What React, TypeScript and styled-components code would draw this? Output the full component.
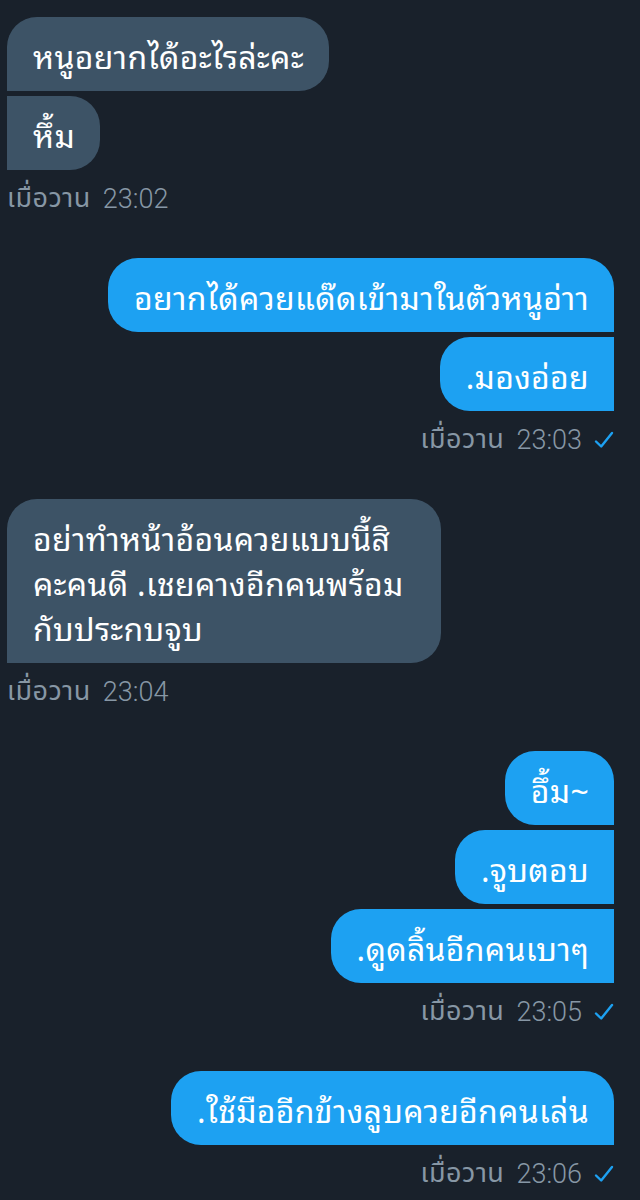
import styled, { createGlobalStyle } from "styled-components";

const GlobalStyle = createGlobalStyle`
  html, body {
    margin: 0;
    padding: 0;
    background: #19212b;
  }
  body {
    font-family: "Noto Sans Thai Looped", "Noto Sans", sans-serif;
  }
`;

type Side = "in" | "out";

const Screen = styled.div`
  width: 640px;
  height: 1200px;
  box-sizing: border-box;
  padding: 17px 26px 0 7px;
  background: #19212b;
  overflow: hidden;
`;

const Group = styled.div<{ $side: Side }>`
  display: flex;
  flex-direction: column;
  align-items: ${(p) => (p.$side === "in" ? "flex-start" : "flex-end")};
  gap: 5px;
  margin-bottom: 44px;
`;

const Bubble = styled.div<{ $side: Side; $first: boolean; $wrapped: boolean }>`
  box-sizing: border-box;
  width: ${(p) => (p.$wrapped ? "434px" : "auto")};
  padding: 14.5px 25px 14.5px 26px;
  font-size: 32px;
  letter-spacing: 0.3px;
  color: #ffffff;
  white-space: nowrap;
  background: ${(p) => (p.$side === "in" ? "#3d5366" : "#1da1f2")};
  border-radius: 30px;
  ${(p) =>
    p.$side === "in"
      ? `
    ${!p.$first ? "border-top-left-radius: 0;" : ""}
    border-bottom-left-radius: 0;
  `
      : `
    ${!p.$first ? "border-top-right-radius: 0;" : ""}
    border-bottom-right-radius: 0;
  `}
`;

const Line = styled.div`
  height: 45px;
  line-height: 45px;
`;

const Meta = styled.div`
  display: flex;
  align-items: center;
  height: 30px;
  margin-top: 9px;
  color: #8797a5;
  font-size: 27px;
  line-height: 30px;
`;

const Day = styled.span`
  font-family: "Noto Sans Thai", "Noto Sans", sans-serif;
  font-weight: 400;
  letter-spacing: 0.5px;
`;

const Clock = styled.span`
  font-family: Roboto, "Noto Sans", sans-serif;
  font-weight: 300;
  margin-left: 12px;
`;

const TickBox = styled.span`
  display: flex;
  margin-left: 12px;
`;

const Tick = () => (
  <TickBox>
    <svg width="20" height="18" viewBox="0 0 20 18" fill="none">
      <path
        d="M2 10.5 L7.2 15.5 L18 2"
        stroke="#1da1f2"
        strokeWidth="2.4"
        strokeLinecap="round"
        strokeLinejoin="round"
      />
    </svg>
  </TickBox>
);

// each bubble is a list of lines, broken where the screenshot breaks them
type Chat = { side: Side; bubbles: string[][]; time: string };

const chats: Chat[] = [
  {
    side: "in",
    bubbles: [["หนูอยากได้อะไรล่ะคะ"], ["หึ้ม"]],
    time: "23:02",
  },
  {
    side: "out",
    bubbles: [["อยากได้ควยแด๊ดเข้ามาในตัวหนูอ่าา"], [".มองอ่อย"]],
    time: "23:03",
  },
  {
    side: "in",
    bubbles: [
      ["อย่าทำหน้าอ้อนควยแบบนี้สิ", "คะคนดี .เชยคางอีกคนพร้อม", "กับประกบจูบ"],
    ],
    time: "23:04",
  },
  {
    side: "out",
    bubbles: [["อึ้ม~"], [".จูบตอบ"], [".ดูดลิ้นอีกคนเบาๆ"]],
    time: "23:05",
  },
  {
    side: "out",
    bubbles: [[".ใช้มืออีกข้างลูบควยอีกคนเล่น"]],
    time: "23:06",
  },
];

export default function App() {
  return (
    <>
      <GlobalStyle />
      <Screen>
        {chats.map((c, i) => (
          <Group key={i} $side={c.side}>
            {c.bubbles.map((lines, j) => (
              <Bubble
                key={j}
                $side={c.side}
                $first={j === 0}
                $wrapped={lines.length > 1}
              >
                {lines.map((l, k) => (
                  <Line key={k}>{l}</Line>
                ))}
              </Bubble>
            ))}
            <Meta>
              <Day>เมื่อวาน</Day>
              <Clock>{c.time}</Clock>
              {c.side === "out" && <Tick />}
            </Meta>
          </Group>
        ))}
      </Screen>
    </>
  );
}
